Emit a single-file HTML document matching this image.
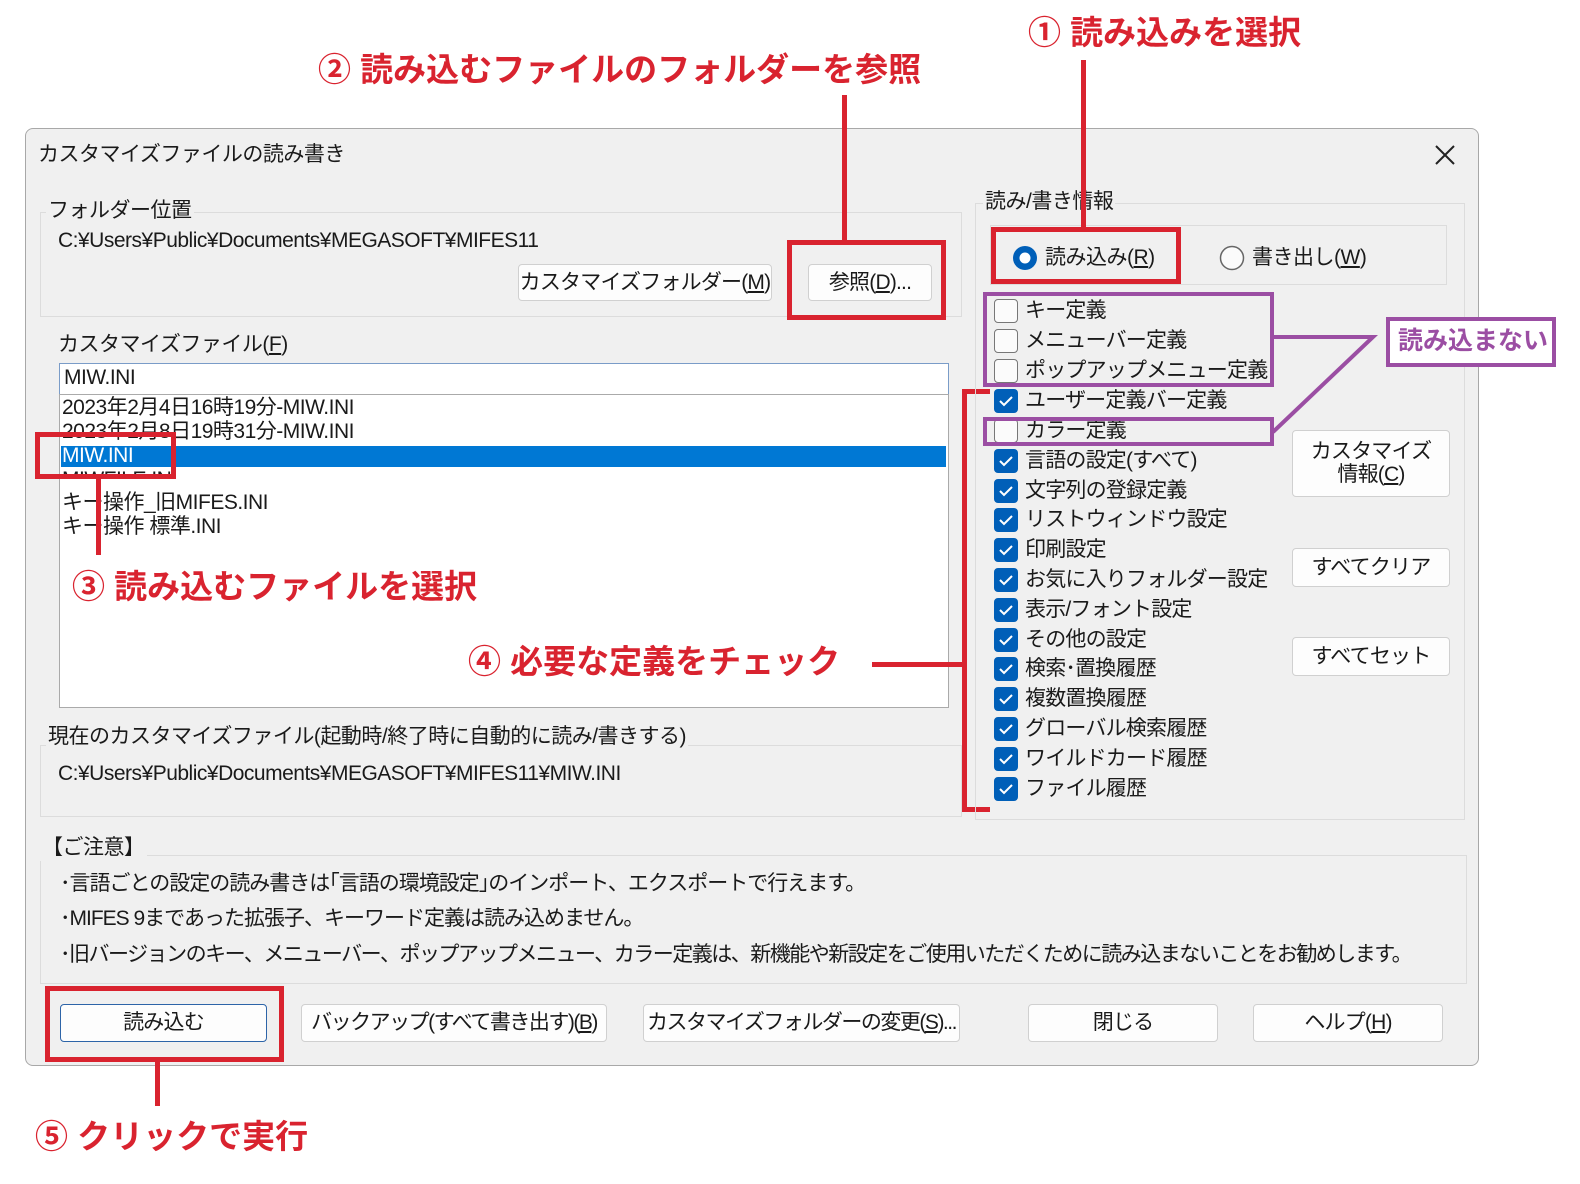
<!DOCTYPE html>
<html><head><meta charset="utf-8"><style>
body{margin:0;width:1580px;height:1184px;background:#fff;position:relative;overflow:hidden;font-family:"Liberation Sans","Noto Sans CJK JP",sans-serif;color:#1a1a1a}
.a{position:absolute;white-space:nowrap}
.t{font-size:21px;line-height:26px;letter-spacing:-0.5px}
.dlg{position:absolute;left:25px;top:128px;width:1452px;height:936px;background:#f0f0f0;border:1px solid #a8a8a8;border-radius:8px}
.grp{position:absolute;border:1px solid #dcdcdc}
.btn{position:absolute;background:#fdfdfd;border:1px solid #d0d0d0;border-radius:4px;font-size:21px;text-align:center;box-sizing:border-box;white-space:nowrap;letter-spacing:-0.8px}
.red{position:absolute;border:5px solid #d9232f;box-sizing:border-box}
.rl{position:absolute;background:#d9232f}
.pur{position:absolute;border:4px solid #9b4ea3;box-sizing:border-box}
.ann{position:absolute;color:#d9232f;font-weight:bold;font-size:33px;white-space:nowrap;line-height:40px}
.cb{position:absolute;left:994px;width:24px;height:24px;box-sizing:border-box;border-radius:4px}
.un{border:1.5px solid #777;background:#fbfbfb}
.ck{background:#005fb8}
.lbl{position:absolute;left:1025px;font-size:21px;line-height:26px;white-space:nowrap;letter-spacing:-0.8px}
u{text-decoration:underline}
</style></head><body>

<div class="dlg"></div>
<div class="a t" style="left:38px;top:142px">カスタマイズファイルの読み書き</div>
<svg class="a" style="left:1434px;top:144px" width="22" height="22"><path d="M2 2L20 20M20 2L2 20" stroke="#222" stroke-width="2"/></svg>

<div class="grp" style="left:40px;top:212px;width:920px;height:103px"></div>
<div class="a t" style="left:46px;top:198px;background:#f0f0f0;padding:0 2px">フォルダー位置</div>
<div class="a t" style="left:58px;top:228px">C:¥Users¥Public¥Documents¥MEGASOFT¥MIFES11</div>
<div class="btn" style="left:518px;top:264px;width:254px;height:37px;line-height:35px">カスタマイズフォルダー(<u>M</u>)</div>
<div class="btn" style="left:808px;top:264px;width:124px;height:37px;line-height:35px">参照(<u>D</u>)...</div>

<div class="a t" style="left:58px;top:332px">カスタマイズファイル(<u>F</u>)</div>
<div class="a" style="left:59px;top:363px;width:888px;height:30px;background:#fff;border:1px solid #7a9cc8"></div>
<div class="a t" style="left:64px;top:365px">MIW.INI</div>
<div class="a" style="left:59px;top:394px;width:888px;height:312px;background:#fff;border:1px solid #aaa"></div>
<div class="a t" style="left:62px;top:395px">2023年2月4日16時19分-MIW.INI</div>
<div class="a t" style="left:62px;top:419px">2023年2月8日19時31分-MIW.INI</div>
<div class="a" style="left:61px;top:446px;width:885px;height:21px;background:#0078d4"></div>
<div class="a t" style="left:62px;top:443px;color:#fff">MIW.INI</div>
<div class="a t" style="left:62px;top:467px;height:12px;overflow:hidden">MIWFILE.INI</div>
<div class="a t" style="left:62px;top:490px">キー操作_旧MIFES.INI</div>
<div class="a t" style="left:62px;top:514px">キー操作 標準.INI</div>

<div class="red" style="left:35px;top:432px;width:141px;height:47px"></div>
<div class="rl" style="left:96px;top:479px;width:5px;height:76px"></div>
<div class="ann" style="left:72px;top:567px">③ 読み込むファイルを選択</div>
<div class="ann" style="left:468px;top:642px">④ 必要な定義をチェック</div>
<div class="rl" style="left:872px;top:662px;width:95px;height:5px"></div>
<div class="rl" style="left:962px;top:389px;width:5px;height:423px"></div>
<div class="rl" style="left:962px;top:389px;width:28px;height:5px"></div>
<div class="rl" style="left:962px;top:807px;width:28px;height:5px"></div>

<div class="grp" style="left:40px;top:745px;width:920px;height:70px"></div>
<div class="a t" style="left:46px;top:724px;background:#f0f0f0;padding:0 2px">現在のカスタマイズファイル(起動時/終了時に自動的に読み/書きする)</div>
<div class="a t" style="left:58px;top:761px">C:¥Users¥Public¥Documents¥MEGASOFT¥MIFES11¥MIW.INI</div>

<div class="grp" style="left:975px;top:203px;width:488px;height:615px"></div>
<div class="a t" style="left:983px;top:189px;background:#f0f0f0;padding:0 2px">読み/書き情報</div>
<div class="grp" style="left:990px;top:225px;width:455px;height:58px"></div>
<svg class="a" style="left:1012px;top:245px" width="26" height="26"><circle cx="13" cy="13" r="12" fill="#005fb8"/><circle cx="13" cy="13" r="5.5" fill="#fff"/></svg>
<div class="a t" style="left:1045px;top:245px">読み込み(<u>R</u>)</div>
<svg class="a" style="left:1219px;top:245px" width="26" height="26"><circle cx="13" cy="13" r="11.5" fill="#fbfbfb" stroke="#666" stroke-width="1.5"/></svg>
<div class="a t" style="left:1252px;top:245px">書き出し(<u>W</u>)</div>
<div class="red" style="left:991px;top:227px;width:190px;height:57px"></div>
<div class="rl" style="left:1081px;top:60px;width:5px;height:170px"></div>
<div class="rl" style="left:842px;top:95px;width:5px;height:148px"></div>
<div class="red" style="left:787px;top:240px;width:159px;height:80px"></div>

<div class="cb un" style="top:299px"></div><div class="lbl" style="top:298px">キー定義</div>
<div class="cb un" style="top:329px"></div><div class="lbl" style="top:328px">メニューバー定義</div>
<div class="cb un" style="top:359px"></div><div class="lbl" style="top:358px">ポップアップメニュー定義</div>
<div class="cb ck" style="top:389px"></div><div class="lbl" style="top:388px">ユーザー定義バー定義</div>
<div class="cb un" style="top:419px"></div><div class="lbl" style="top:418px">カラー定義</div>
<div class="cb ck" style="top:449px"></div><div class="lbl" style="top:448px">言語の設定(すべて)</div>
<div class="cb ck" style="top:479px"></div><div class="lbl" style="top:478px">文字列の登録定義</div>
<div class="cb ck" style="top:508px"></div><div class="lbl" style="top:507px">リストウィンドウ設定</div>
<div class="cb ck" style="top:538px"></div><div class="lbl" style="top:537px">印刷設定</div>
<div class="cb ck" style="top:568px"></div><div class="lbl" style="top:567px">お気に入りフォルダー設定</div>
<div class="cb ck" style="top:598px"></div><div class="lbl" style="top:597px">表示/フォント設定</div>
<div class="cb ck" style="top:628px"></div><div class="lbl" style="top:627px">その他の設定</div>
<div class="cb ck" style="top:657px"></div><div class="lbl" style="top:656px">検索･置換履歴</div>
<div class="cb ck" style="top:687px"></div><div class="lbl" style="top:686px">複数置換履歴</div>
<div class="cb ck" style="top:717px"></div><div class="lbl" style="top:716px">グローバル検索履歴</div>
<div class="cb ck" style="top:747px"></div><div class="lbl" style="top:746px">ワイルドカード履歴</div>
<div class="cb ck" style="top:777px"></div><div class="lbl" style="top:776px">ファイル履歴</div>
<svg class="a" style="left:994px;top:0" width="24" height="810">
<g fill="none" stroke="#fff" stroke-width="2"><path d="M6 401l4 4 8-8"/><path d="M6 461l4 4 8-8"/><path d="M6 491l4 4 8-8"/><path d="M6 520l4 4 8-8"/><path d="M6 550l4 4 8-8"/><path d="M6 580l4 4 8-8"/><path d="M6 610l4 4 8-8"/><path d="M6 640l4 4 8-8"/><path d="M6 669l4 4 8-8"/><path d="M6 699l4 4 8-8"/><path d="M6 729l4 4 8-8"/><path d="M6 759l4 4 8-8"/><path d="M6 789l4 4 8-8"/></g></svg>

<div class="pur" style="left:983px;top:292px;width:291px;height:95px"></div>
<div class="pur" style="left:983px;top:417px;width:291px;height:29px"></div>
<svg class="a" style="left:1270px;top:320px" width="130" height="120"><path d="M3 17H103L3 112" fill="none" stroke="#9b4ea3" stroke-width="4"/></svg>
<div class="pur" style="left:1386px;top:317px;width:170px;height:50px;background:#fff"></div>
<div class="a" style="left:1398px;top:325px;color:#9b4ea3;font-weight:bold;font-size:25px;line-height:32px">読み込まない</div>

<div class="btn" style="left:1292px;top:430px;width:158px;height:67px;line-height:23px;padding-top:9px">カスタマイズ<br>情報(<u>C</u>)</div>
<div class="btn" style="left:1292px;top:548px;width:158px;height:39px;line-height:37px">すべてクリア</div>
<div class="btn" style="left:1292px;top:637px;width:158px;height:39px;line-height:37px">すべてセット</div>

<div class="grp" style="left:40px;top:855px;width:1425px;height:127px"></div>
<div class="a t" style="left:40px;top:835px;background:#f0f0f0;padding:0 2px">【ご注意】</div>
<div class="a t" style="left:60px;top:871px;letter-spacing:-1px">･言語ごとの設定の読み書きは｢言語の環境設定｣のインポート、エクスポートで行えます。</div>
<div class="a t" style="left:60px;top:906px;letter-spacing:-1px">･MIFES 9まであった拡張子、キーワード定義は読み込めません。</div>
<div class="a t" style="left:60px;top:942px;letter-spacing:-1.5px">･旧バージョンのキー、メニューバー、ポップアップメニュー、カラー定義は、新機能や新設定をご使用いただくために読み込まないことをお勧めします。</div>

<div class="btn" style="left:60px;top:1004px;width:207px;height:38px;line-height:36px;border-color:#2d64a8">読み込む</div>
<div class="btn" style="left:301px;top:1004px;width:306px;height:38px;line-height:36px;letter-spacing:-1.5px">バックアップ(すべて書き出す)(<u>B</u>)</div>
<div class="btn" style="left:643px;top:1004px;width:317px;height:38px;line-height:36px;letter-spacing:-1.5px">カスタマイズフォルダーの変更(<u>S</u>)...</div>
<div class="btn" style="left:1028px;top:1004px;width:190px;height:38px;line-height:36px">閉じる</div>
<div class="btn" style="left:1253px;top:1004px;width:190px;height:38px;line-height:36px">ヘルプ(<u>H</u>)</div>
<div class="red" style="left:45px;top:986px;width:239px;height:76px"></div>
<div class="rl" style="left:155px;top:1062px;width:5px;height:44px"></div>

<div class="ann" style="left:318px;top:50px">② 読み込むファイルのフォルダーを参照</div>
<div class="ann" style="left:1028px;top:13px">① 読み込みを選択</div>
<div class="ann" style="left:35px;top:1117px">⑤ クリックで実行</div>
</body></html>
